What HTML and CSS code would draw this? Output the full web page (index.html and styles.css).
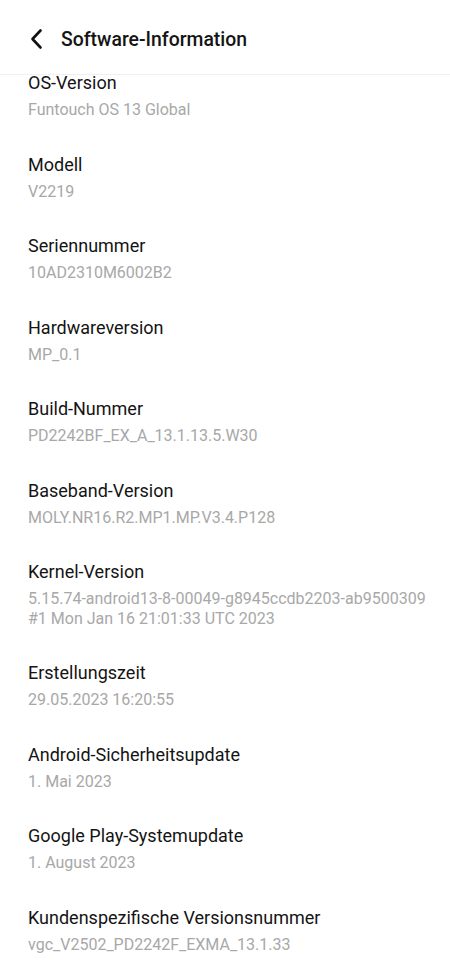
FILE: index.html
```html
<!DOCTYPE html>
<html lang="de">
<head>
    <meta charset="UTF-8">
    <meta name="viewport" content="width=device-width, initial-scale=1.0">
    <title>Software-Information</title>
    <link rel="stylesheet" href="styles.css">
</head>
<body>
    <!-- Kopfzeile -->
    <div class="header">
        <svg class="back" width="16" height="22" viewBox="0 0 16 22">
            <path d="M11.5 2.5 L3.5 11 L11.5 19.5" fill="none" stroke="#111" stroke-width="2.6" stroke-linecap="round" stroke-linejoin="round"/>
        </svg>
        <span class="title">Software-Information</span>
    </div>

    <div class="list">
        <div class="item">
            <div class="label">OS-Version</div>
            <div class="value">Funtouch OS 13 Global</div>
        </div>
        <div class="item">
            <div class="label">Modell</div>
            <div class="value">V2219</div>
        </div>
        <div class="item">
            <div class="label">Seriennummer</div>
            <div class="value">10AD2310M6002B2</div>
        </div>
        <div class="item">
            <div class="label">Hardwareversion</div>
            <div class="value">MP_0.1</div>
        </div>
        <div class="item">
            <div class="label">Build-Nummer</div>
            <div class="value">PD2242BF_EX_A_13.1.13.5.W30</div>
        </div>
        <div class="item">
            <div class="label">Baseband-Version</div>
            <div class="value">MOLY.NR16.R2.MP1.MP.V3.4.P128</div>
        </div>
        <div class="item">
            <div class="label">Kernel-Version</div>
            <div class="value">5.15.74-android13-8-00049-g8945ccdb2203-ab9500309<br>#1 Mon Jan 16 21:01:33 UTC 2023</div>
        </div>
        <div class="item">
            <div class="label">Erstellungszeit</div>
            <div class="value">29.05.2023 16:20:55</div>
        </div>
        <div class="item">
            <div class="label">Android-Sicherheitsupdate</div>
            <div class="value">1. Mai 2023</div>
        </div>
        <div class="item">
            <div class="label">Google Play-Systemupdate</div>
            <div class="value">1. August 2023</div>
        </div>
        <div class="item">
            <div class="label">Kundenspezifische Versionsnummer</div>
            <div class="value">vgc_V2502_PD2242F_EXMA_13.1.33</div>
        </div>
    </div>
</body>
</html>
```

FILE: styles.css
```css
body {
    margin: 0;
    font-family: Roboto, "Noto Sans", sans-serif;
    background-color: #fff;
    color: #111;
    overflow: hidden;
}
.header {
    position: relative;
    z-index: 1;
    height: 75px;
    display: flex;
    align-items: center;
    padding-left: 29px;
    padding-top: 4px;
    box-sizing: border-box;
    background-color: #fff;
    border-bottom: 1px solid #f0f0f0;
}
.back {
    display: block;
    margin-right: 16px;
}
.title {
    font-size: 19.4px;
    font-weight: 500;
    color: #141414;
}
.list {
    margin-top: -5px;
    padding: 0 10px 0 28px;
}
.item {
    padding-bottom: 32px;
}
.label {
    font-size: 18px;
    line-height: 26px;
    color: #141414;
}
.value {
    margin-top: 4px;
    font-size: 16px;
    line-height: 19.5px;
    color: #a8a8a8;
    white-space: nowrap;
}
```
